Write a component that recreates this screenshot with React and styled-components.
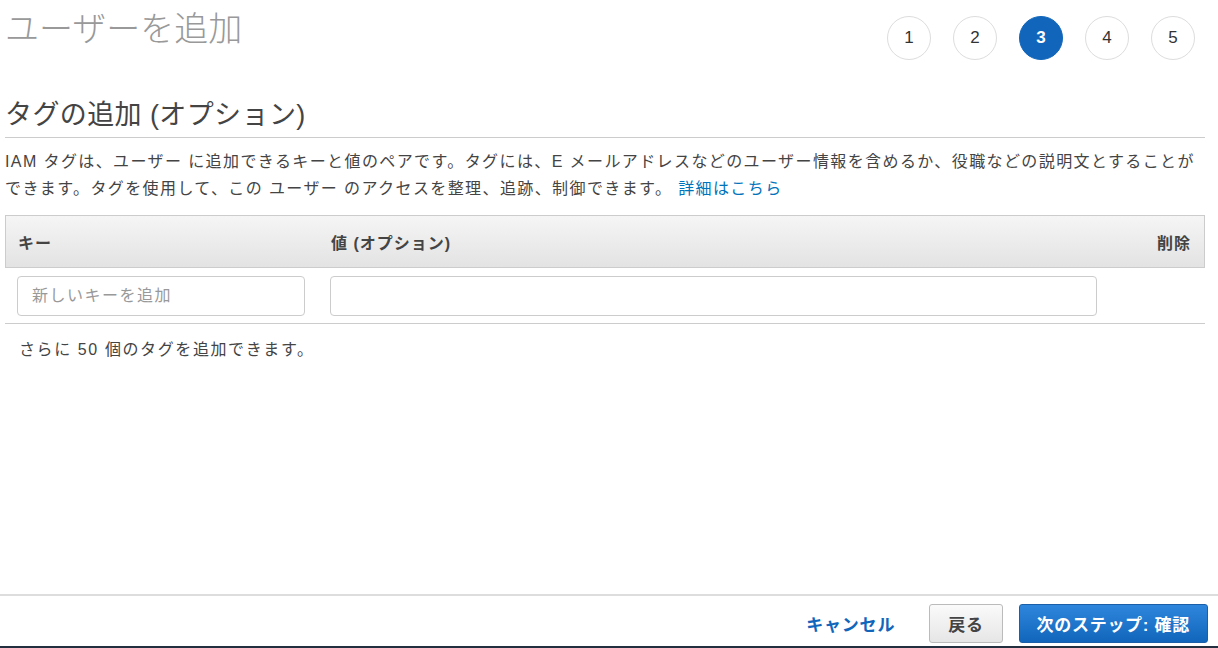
import React from "react";
import styled, { createGlobalStyle } from "styled-components";

const GlobalStyle = createGlobalStyle`
  html, body {
    margin: 0;
    padding: 0;
    height: 100%;
    background: #fff;
  }
  body {
    font-family: "Liberation Sans", "Noto Sans CJK JP", Arial, sans-serif;
    color: #444;
  }
  #root {
    height: 100%;
  }
`;

const Page = styled.div`
  display: flex;
  flex-direction: column;
  height: 100vh;
  box-sizing: border-box;
`;

const Main = styled.main`
  flex: 1;
  padding: 0 13px 0 5px;
`;

const TopBar = styled.div`
  display: flex;
  justify-content: space-between;
  align-items: flex-start;
`;

const Title = styled.h1`
  margin: 9px 0 0;
  font-size: 34px;
  font-weight: 300;
  line-height: 40px;
  color: #999;
`;

const Steps = styled.ol`
  display: flex;
  gap: 22px;
  list-style: none;
  margin: 16px 10px 0 0;
  padding: 0;
`;

const Step = styled.li`
  width: 44px;
  height: 44px;
  box-sizing: border-box;
  border-radius: 50%;
  border: 1px solid ${({ active }) => (active ? "#1166bb" : "#ddd")};
  background: ${({ active }) => (active ? "#1166bb" : "#fff")};
  color: ${({ active }) => (active ? "#fff" : "#333")};
  font-family: "Liberation Sans", Arial, sans-serif;
  font-size: 17px;
  font-weight: ${({ active }) => (active ? 700 : 400)};
  display: flex;
  align-items: center;
  justify-content: center;
`;

const SectionTitle = styled.h2`
  margin: 38px 0 0;
  padding-bottom: 5px;
  font-size: 27px;
  font-weight: 400;
  line-height: 34px;
  letter-spacing: 0.4px;
  color: #444;
  border-bottom: 1px solid #ccc;
`;

const Description = styled.p`
  margin: 10px 0 0;
  font-size: 16px;
  line-height: 27px;
  letter-spacing: 1.4px;
  color: #444;
`;

const Link = styled.a`
  color: #0073bb;
  text-decoration: none;
`;

const Table = styled.div`
  margin-top: 13px;
`;

const HeaderRow = styled.div`
  display: grid;
  grid-template-columns: 325px 1fr 100px;
  align-items: center;
  height: 53px;
  box-sizing: border-box;
  border: 1px solid #ccc;
  background: linear-gradient(#f5f5f5, #e3e3e3);
  font-weight: 700;
  font-size: 16px;
  letter-spacing: 1px;
  color: #444;
`;

const HeadCell = styled.div`
  padding: ${({ right }) => (right ? "0 13px 0 0" : "0")};
  text-align: ${({ right }) => (right ? "right" : "left")};
  &:first-child {
    padding-left: 12px;
  }
`;

const BodyRow = styled.div`
  display: grid;
  grid-template-columns: 325px 767px 1fr;
  align-items: center;
  padding: 8px 0 7px;
  border-bottom: 1px solid #ccc;
`;

const Cell = styled.div`
  padding-left: ${({ pad }) => pad}px;
`;

const Input = styled.input`
  display: block;
  width: ${({ w }) => w}px;
  height: 40px;
  box-sizing: border-box;
  border: 1px solid #ccc;
  border-radius: 4px;
  padding: 0 14px;
  font-family: "Liberation Sans", "Noto Sans CJK JP", Arial, sans-serif;
  font-size: 16px;
  letter-spacing: 1.5px;
  color: #444;
  outline: none;
  &::placeholder {
    color: #999;
  }
`;

const Remaining = styled.p`
  margin: 14px 0 0 14px;
  font-size: 16px;
  line-height: 24px;
  letter-spacing: 1.6px;
  color: #444;
`;

const Footer = styled.footer`
  display: flex;
  justify-content: flex-end;
  align-items: center;
  gap: 16px;
  padding: 8px 10px 3px 0;
  border-top: 2px solid #ddd;
  border-bottom: 2px solid #232f3e;
`;

const CancelLink = styled.a`
  color: #1166bb;
  font-weight: 700;
  font-size: 17px;
  letter-spacing: 0.8px;
  text-decoration: none;
  margin-right: 18px;
`;

const Button = styled.button`
  height: 39px;
  box-sizing: border-box;
  padding: 0 ${({ primary }) => (primary ? "17px" : "18px")};
  border-radius: 3px;
  font-family: "Liberation Sans", "Noto Sans CJK JP", Arial, sans-serif;
  font-size: 17px;
  font-weight: 700;
  letter-spacing: 0.7px;
  border: 1px solid ${({ primary }) => (primary ? "#1a5fa8" : "#bbb")};
  background: ${({ primary }) =>
    primary
      ? "linear-gradient(#2e86dc, #1166bb)"
      : "linear-gradient(#fafafa, #e6e6e6)"};
  color: ${({ primary }) => (primary ? "#fff" : "#444")};
  cursor: pointer;
`;

const steps = [1, 2, 3, 4, 5];

export default function App() {
  return (
    <>
      <GlobalStyle />
      <Page>
        <Main>
          <TopBar>
            <Title>ユーザーを追加</Title>
            <Steps>
              {steps.map((n) => (
                <Step key={n} active={n === 3}>
                  {n}
                </Step>
              ))}
            </Steps>
          </TopBar>

          <SectionTitle>タグの追加 (オプション)</SectionTitle>
          <Description>
            IAM タグは、ユーザー に追加できるキーと値のペアです。タグには、E
            メールアドレスなどのユーザー情報を含めるか、役職などの説明文とすることができます。タグを使用して、この
            ユーザー のアクセスを整理、追跡、制御できます。{" "}
            <Link href="#">詳細はこちら</Link>
          </Description>

          <Table>
            <HeaderRow>
              <HeadCell>キー</HeadCell>
              <HeadCell>値 (オプション)</HeadCell>
              <HeadCell right>削除</HeadCell>
            </HeaderRow>
            <BodyRow>
              <Cell pad={12}>
                <Input w={288} placeholder="新しいキーを追加" />
              </Cell>
              <Cell pad={0}>
                <Input w={767} />
              </Cell>
              <Cell pad={0} />
            </BodyRow>
          </Table>

          <Remaining>さらに 50 個のタグを追加できます。</Remaining>
        </Main>

        <Footer>
          <CancelLink href="#">キャンセル</CancelLink>
          <Button>戻る</Button>
          <Button primary>次のステップ: 確認</Button>
        </Footer>
      </Page>
    </>
  );
}
